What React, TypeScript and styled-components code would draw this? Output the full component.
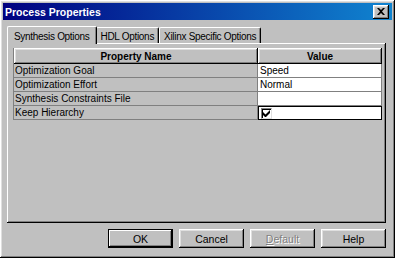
import { FC, Fragment } from 'react';
import styled, { createGlobalStyle } from 'styled-components';

const GlobalStyle = createGlobalStyle`
  html, body {
    margin: 0;
    padding: 0;
    background: #c0c0c0;
  }
  body {
    font-family: 'Liberation Sans', Arial, sans-serif;
    font-size: 10px;
    color: #000;
  }
`;

const raised = `
  box-shadow: inset -1px -1px #000, inset 1px 1px #fff, inset -2px -2px #808080, inset 2px 2px #dfdfdf;
`;

const SWindow = styled.div`
  width: 395px;
  height: 258px;
  box-sizing: border-box;
  background: #c0c0c0;
  padding: 3px;
  display: flex;
  flex-direction: column;
  ${raised}
`;

const STitleBar = styled.div`
  height: 17px;
  display: flex;
  align-items: center;
  justify-content: space-between;
  padding: 0 3px 0 2px;
  background: linear-gradient(90deg, #000080 0%, #1084d0 100%);
`;

const STitle = styled.span`
  color: #fff;
  font-weight: bold;
  font-size: 10.5px;
`;

const SCloseButton = styled.div`
  width: 16px;
  height: 14px;
  box-sizing: border-box;
  background: #c0c0c0;
  display: flex;
  align-items: center;
  justify-content: center;
  ${raised}
`;

const SBody = styled.div`
  flex: 1;
  display: flex;
  flex-direction: column;
  padding: 5px 0 0 4px;
`;

const STabs = styled.div`
  display: flex;
  align-items: flex-end;
  height: 18px;
  padding-left: 2px;
  position: relative;
  z-index: 1;
`;

const STab = styled.div<{ $active?: boolean }>`
  height: ${({ $active }) => ($active ? 18 : 16)}px;
  box-sizing: border-box;
  padding: ${({ $active }) => ($active ? '1px 6px 0 6px' : '1px 4px 0 4px')};
  margin: ${({ $active }) => ($active ? '0 -1px -1px -2px' : '0')};
  display: flex;
  align-items: center;
  letter-spacing: -0.3px;
  background: #c0c0c0;
  border-top: 1px solid #fff;
  border-left: 1px solid #fff;
  border-right: 1px solid #000;
  border-radius: 2px 2px 0 0;
  box-shadow: inset -1px 0 #808080;
  white-space: nowrap;
  position: relative;
  z-index: ${({ $active }) => ($active ? 2 : 1)};
`;

const SPanel = styled.div`
  width: 379px;
  height: 180px;
  box-sizing: border-box;
  padding: 5px 6px;
  box-shadow: inset -1px -1px #000, inset 1px 1px #fff, inset -2px -2px #808080;
`;

const STable = styled.div`
  width: 368px;
  display: grid;
  grid-template-columns: 244px 1fr;
  border-left: 1px solid #808080;
`;

const SHeaderCell = styled.div`
  height: 16px;
  box-sizing: border-box;
  display: flex;
  align-items: center;
  justify-content: center;
  font-weight: bold;
  ${raised}
`;

const SNameCell = styled.div`
  height: 14px;
  box-sizing: border-box;
  padding-left: 1px;
  line-height: 13px;
  border-bottom: 1px solid #808080;
  border-right: 1px solid #808080;
  white-space: nowrap;
`;

const SValueCell = styled.div<{ $focused?: boolean }>`
  height: 14px;
  box-sizing: border-box;
  padding-left: 2px;
  line-height: 13px;
  background: #fff;
  border-bottom: 1px solid ${({ $focused }) => ($focused ? '#000' : '#808080')};
  border-right: 1px solid ${({ $focused }) => ($focused ? '#000' : '#808080')};
  border-top: ${({ $focused }) => ($focused ? '1px solid #000' : 'none')};
  border-left: ${({ $focused }) => ($focused ? '1px solid #000' : 'none')};
  display: flex;
  align-items: center;
`;

const SCheckbox = styled.div`
  width: 11px;
  height: 11px;
  box-sizing: border-box;
  background: #fff;
  border-top: 1px solid #808080;
  border-left: 1px solid #808080;
  border-right: 1px solid #dfdfdf;
  border-bottom: 1px solid #dfdfdf;
  box-shadow: inset 1px 1px #000;
  display: flex;
  align-items: center;
  justify-content: center;
`;

const SButtons = styled.div`
  display: flex;
  justify-content: flex-end;
  gap: 6px;
  padding: 6px 6px 0 0;
`;

const SButton = styled.div<{ $default?: boolean; $disabled?: boolean }>`
  width: 65px;
  height: 19px;
  box-sizing: border-box;
  display: flex;
  align-items: center;
  justify-content: center;
  font-size: 10.5px;
  background: #c0c0c0;
  color: ${({ $disabled }) => ($disabled ? '#808080' : '#000')};
  text-shadow: ${({ $disabled }) => ($disabled ? '1px 1px #fff' : 'none')};
  box-shadow: ${({ $default }) =>
    $default
      ? 'inset 0 0 0 1px #000, inset -2px -2px #000, inset 2px 2px #fff, inset -3px -3px #808080'
      : 'inset -1px -1px #000, inset 1px 1px #fff, inset -2px -2px #808080, inset 2px 2px #dfdfdf'};
`;

interface Property {
  name: string;
  value?: string;
  check?: boolean;
}

const properties: Property[] = [
  { name: 'Optimization Goal', value: 'Speed' },
  { name: 'Optimization Effort', value: 'Normal' },
  { name: 'Synthesis Constraints File', value: '' },
  { name: 'Keep Hierarchy', check: true },
];

const App: FC = () => (
  <>
    <GlobalStyle />
    <SWindow>
      <STitleBar>
        <STitle>Process Properties</STitle>
        <SCloseButton>
          <svg width="8" height="7" viewBox="0 0 8 7">
            <path d="M0 0h2l2 2 2-2h2L5 3.5 8 7H6L4 5 2 7H0l3-3.5z" fill="#000" />
          </svg>
        </SCloseButton>
      </STitleBar>
      <SBody>
        <STabs>
          <STab $active>Synthesis Options</STab>
          <STab>HDL Options</STab>
          <STab>Xilinx Specific Options</STab>
        </STabs>
        <SPanel>
          <STable>
            <SHeaderCell>Property Name</SHeaderCell>
            <SHeaderCell>Value</SHeaderCell>
            {properties.map((p) => (
              <Fragment key={p.name}>
                <SNameCell>{p.name}</SNameCell>
                <SValueCell $focused={p.check}>
                  {p.check ? (
                    <SCheckbox>
                      <svg width="7" height="7" viewBox="0 0 7 7">
                        <path d="M0 2v3l2 2h1l4-4V0L2.5 4.5z" fill="#000" />
                      </svg>
                    </SCheckbox>
                  ) : (
                    p.value
                  )}
                </SValueCell>
              </Fragment>
            ))}
          </STable>
        </SPanel>
        <SButtons>
          <SButton $default>OK</SButton>
          <SButton>Cancel</SButton>
          <SButton $disabled>
            <span>
              <u>D</u>efault
            </span>
          </SButton>
          <SButton>Help</SButton>
        </SButtons>
      </SBody>
    </SWindow>
  </>
);

export default App;
